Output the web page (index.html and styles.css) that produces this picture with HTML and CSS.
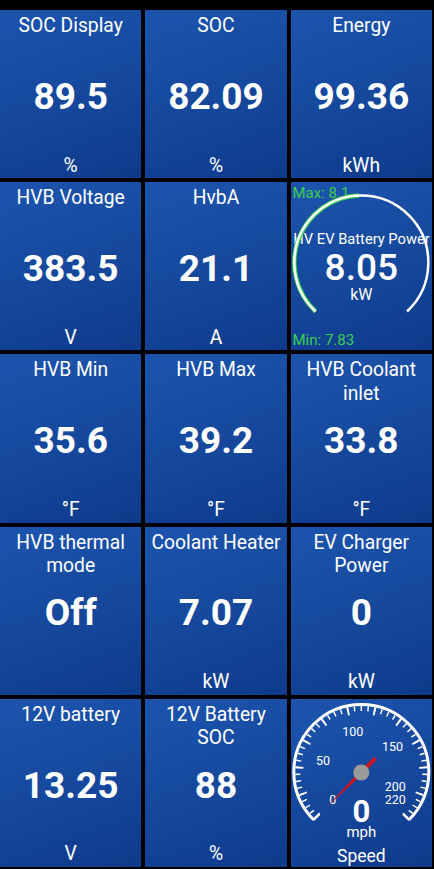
FILE: index.html
```html
<!DOCTYPE html>
<html lang="en">
<head>
<meta charset="utf-8">
<title>Dashboard</title>
<link rel="stylesheet" href="styles.css">
</head>
<body>
<main class="grid">
  <section class="tile"><div class="title">SOC Display</div><div class="value">89.5</div><div class="unit">%</div></section>
  <section class="tile"><div class="title">SOC</div><div class="value">82.09</div><div class="unit">%</div></section>
  <section class="tile"><div class="title">Energy</div><div class="value">99.36</div><div class="unit">kWh</div></section>

  <section class="tile"><div class="title">HVB Voltage</div><div class="value">383.5</div><div class="unit">V</div></section>
  <section class="tile"><div class="title">HvbA</div><div class="value">21.1</div><div class="unit">A</div></section>
  <section class="tile gauge-tile">
    <svg class="gauge" viewBox="0 0 141.3 168.2">
      <text class="g-minmax" x="1.5" y="16">Max: 8.1</text>
      <text class="g-minmax" x="1.5" y="163">Min: 7.83</text>
      <text class="g-name" x="70.5" y="61.7">HV EV Battery Power</text>
      <text class="g-val" x="70.3" y="97.7">8.05</text>
      <text class="g-unit" x="70.3" y="117.7">kW</text>
      <path class="g-green" d="M24.61 129.48 A67 67 0 0 1 67.96 13.54"/>
      <path class="g-ring" d="M24.61 129.48 A67 67 0 1 1 115.99 129.48"/>
    </svg>
  </section>

  <section class="tile"><div class="title">HVB Min</div><div class="value">35.6</div><div class="unit">°F</div></section>
  <section class="tile"><div class="title">HVB Max</div><div class="value">39.2</div><div class="unit">°F</div></section>
  <section class="tile"><div class="title">HVB Coolant inlet</div><div class="value">33.8</div><div class="unit">°F</div></section>

  <section class="tile"><div class="title">HVB thermal mode</div><div class="value">Off</div><div class="unit"></div></section>
  <section class="tile"><div class="title">Coolant Heater</div><div class="value">7.07</div><div class="unit">kW</div></section>
  <section class="tile"><div class="title">EV Charger Power</div><div class="value">0</div><div class="unit">kW</div></section>

  <section class="tile"><div class="title">12V battery</div><div class="value">13.25</div><div class="unit">V</div></section>
  <section class="tile"><div class="title">12V Battery SOC</div><div class="value">88</div><div class="unit">%</div></section>
  <section class="tile gauge-tile">
    <svg class="gauge" viewBox="0 0 141.3 168.2">
      <path class="s-ring" d="M22.57 120.73 A67.5 67.5 0 1 1 118.03 120.73"/>
      <path class="s-minor" pathLength="220" d="M25.4 117.9 A63.5 63.5 0 1 1 115.2 117.9"/>
      <path class="s-major" pathLength="220" d="M26.46 116.84 A62 62 0 1 1 114.14 116.84"/>
      <line class="s-end" x1="22.2" y1="121.1" x2="28.5" y2="114.8"/>
      <line class="s-end" x1="118.4" y1="121.1" x2="112.1" y2="114.8"/>
      <text class="s-lbl" x="41.8" y="104.9">0</text>
      <text class="s-lbl" x="32" y="66.1">50</text>
      <text class="s-lbl" x="61.8" y="36.6">100</text>
      <text class="s-lbl" x="101.5" y="52.4">150</text>
      <text class="s-lbl" x="104.3" y="91.6">200</text>
      <text class="s-lbl" x="104.3" y="105">220</text>
      <polygon class="s-needle" points="35.65,108.35 71.71,74.91 85.85,60.77 83.03,57.95 68.89,72.09"/>
      <circle class="s-hub" cx="70.3" cy="73.5" r="8"/>
      <text class="s-val" x="70.3" y="123">0</text>
      <text class="s-unit" x="70.3" y="138.5">mph</text>
      <text class="s-name" x="70.3" y="163">Speed</text>
    </svg>
  </section>
</main>
</body>
</html>
```

FILE: styles.css
```css
html, body {
  margin: 0;
  padding: 0;
  background: #000;
}

.grid {
  box-sizing: border-box;
  width: 434px;
  height: 869px;
  padding: 10px 2px 2px 0;
  display: grid;
  grid-template-columns: repeat(3, 1fr);
  grid-template-rows: repeat(5, 1fr);
  gap: 4px;
  font-family: Roboto, "Noto Sans", sans-serif;
  color: #fff;
}

.tile {
  position: relative;
  min-width: 0;
  min-height: 0;
  box-sizing: border-box;
  padding: 4px 0 1.5px;
  display: grid;
  grid-template-rows: 1fr auto 1fr;
  text-align: center;
  background: linear-gradient(160deg, #1c54ae 0%, #164a9f 45%, #0e3a8b 100%);
  overflow: hidden;
}

.title {
  align-self: start;
  font-size: 19.3px;
  line-height: 23.3px;
}

.value {
  align-self: center;
  padding-top: 2px;
  font-size: 37px;
  line-height: 37px;
  font-weight: 700;
}

.unit {
  align-self: end;
  font-size: 19.3px;
  line-height: 23px;
  min-height: 23px;
}

.gauge-tile {
  padding: 0;
  display: block;
}

.gauge {
  display: block;
  width: 100%;
  height: 100%;
  font-family: Roboto, "Noto Sans", sans-serif;
}

.g-minmax {
  font-size: 15px;
  fill: #3ccf4e;
}

.g-name {
  font-size: 14.7px;
  fill: #fff;
  text-anchor: middle;
}

.g-val {
  font-size: 37px;
  font-weight: 500;
  fill: #fff;
  text-anchor: middle;
}

.g-unit {
  font-size: 16px;
  fill: #fff;
  text-anchor: middle;
}

.g-green {
  fill: none;
  stroke: #3ccf4e;
  stroke-width: 4.5;
}

.g-ring {
  fill: none;
  stroke: #fff;
  stroke-width: 2.5;
}

.s-ring {
  fill: none;
  stroke: #fff;
  stroke-width: 3;
}

.s-minor {
  fill: none;
  stroke: #fff;
  stroke-width: 5;
  stroke-dasharray: 1.1 3.9;
  stroke-dashoffset: 0.55;
}

.s-major {
  fill: none;
  stroke: #fff;
  stroke-width: 8;
  stroke-dasharray: 1.4 18.6;
  stroke-dashoffset: 0.7;
}

.s-end {
  stroke: #fff;
  stroke-width: 2.5;
}

.s-lbl {
  font-size: 12.5px;
  fill: #fff;
  text-anchor: middle;
}

.s-needle {
  fill: #d0141d;
}

.s-hub {
  fill: #9b9b9b;
}

.s-val {
  font-size: 31px;
  font-weight: 700;
  fill: #fff;
  text-anchor: middle;
}

.s-unit {
  font-size: 15px;
  fill: #fff;
  text-anchor: middle;
}

.s-name {
  font-size: 17.5px;
  fill: #fff;
  text-anchor: middle;
}
```
